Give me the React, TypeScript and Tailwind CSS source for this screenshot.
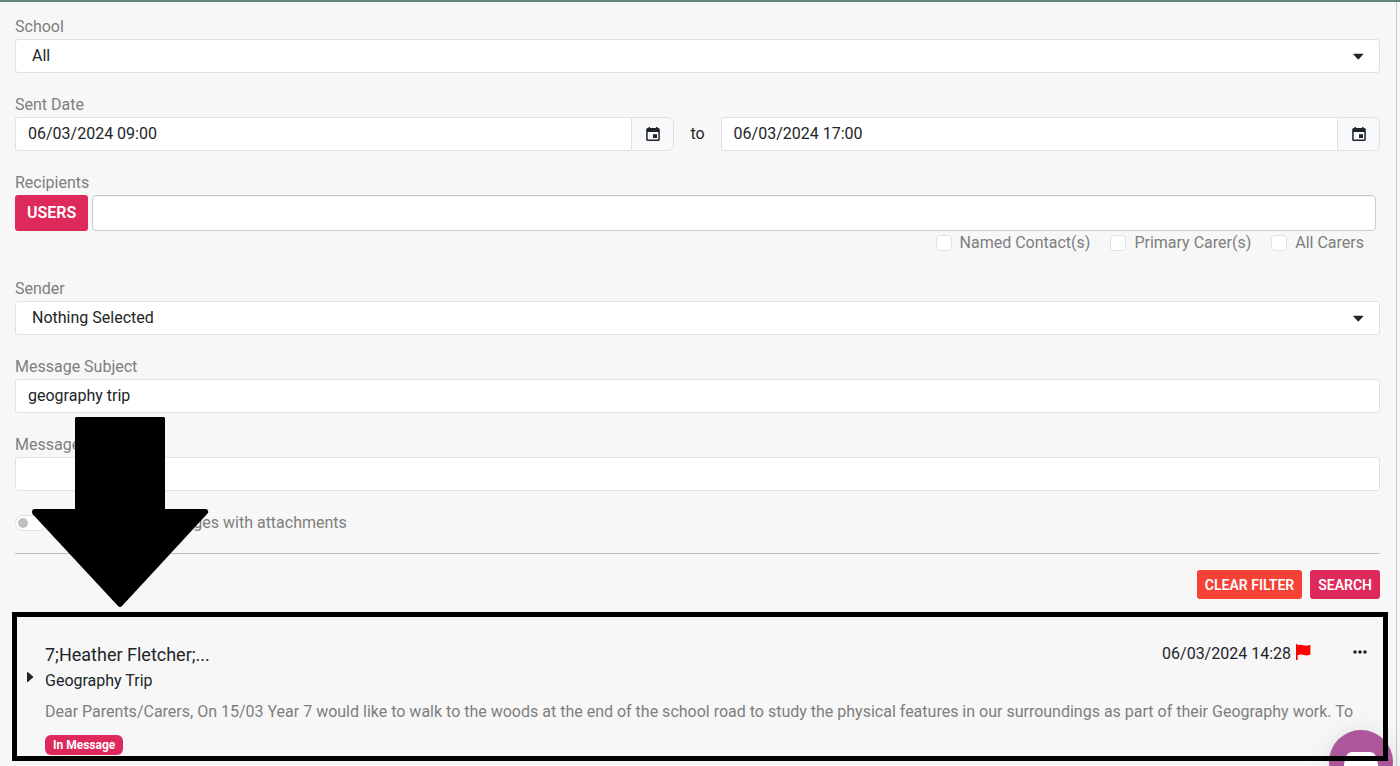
import type { ReactNode } from 'react';

const labelClass = 'block h-6 leading-6 text-[#7e7e7e]';
const fieldClass =
  'block h-[34px] w-full min-w-0 rounded-[3px] border border-[#dee2e6] bg-white px-3 pb-0.5 text-[#212529] outline-none';

function CalendarIcon() {
  return (
    <svg width="14" height="15" viewBox="0 0 14 15" fill="#212529" aria-hidden="true">
      <path
        fillRule="evenodd"
        d="M2.500 0H4v1h6V0h1.500v1h.8A1.600 1.600 0 0 1 13.800 2.600v9.800A1.600 1.600 0 0 1 12.300 14H1.700A1.600 1.600 0 0 1 .2 12.400V2.600A1.600 1.600 0 0 1 1.700 1h.8zM1.700 5v7.500h10.600V5zM7 7.200h4V11H7z"
      />
    </svg>
  );
}

function SelectField({ id, label, value }: { id: string; label: string; value: string }) {
  return (
    <div>
      <label htmlFor={id} className={labelClass}>{label}</label>
      <div className="relative">
        <select
          id={id}
          className="block h-[34px] w-full appearance-none rounded-[3px] border border-[#dee2e6] bg-white px-4 text-[#212529] outline-none"
        >
          <option>{value}</option>
        </select>
        <svg className="pointer-events-none absolute top-[14px] right-4" width="11" height="7" viewBox="0 0 11 7" fill="#212529" aria-hidden="true">
          <path d="M.8.700h9q.8.200.3.900L6 6.100q-.7.600-1.400 0L.5 1.600Q0 .9.800.7z" />
        </svg>
      </div>
    </div>
  );
}

function DateField({ id, name, value }: { id: string; name: string; value: string }) {
  return (
    <div className="flex flex-1">
      <input
        id={id}
        aria-label={name}
        defaultValue={value}
        className="h-[34px] min-w-0 flex-1 rounded-l-[3px] border border-r-0 border-[#dee2e6] bg-white px-3 pb-0.5 text-[#212529] outline-none"
      />
      <button
        type="button"
        aria-label="Open calendar"
        className="flex h-[34px] w-[43px] items-center justify-center rounded-r-md border border-[#dee2e6] bg-[#f8f9fa]"
      >
        <CalendarIcon />
      </button>
    </div>
  );
}

function TextField({ id, label, value }: { id: string; label: string; value: string }) {
  return (
    <div>
      <label htmlFor={id} className={labelClass}>{label}</label>
      <input id={id} defaultValue={value} className={fieldClass} />
    </div>
  );
}

function CheckOption({ children }: { children: ReactNode }) {
  return (
    <label className="flex items-center gap-2 text-[#7e7e7e]">
      <input type="checkbox" className="size-4 appearance-none rounded-[4px] border border-[#dee2e6] bg-white" />
      {children}
    </label>
  );
}

export default function App() {
  return (
    <div className="relative flex min-h-screen overflow-hidden border-t-2 border-[#628680] bg-[#f7f7f7] font-['Roboto',sans-serif] text-base text-[#212529]">
      <main className="min-w-0 flex-1 pt-[13px] pr-4 pl-[15px]">
        <form className="flex flex-col gap-5" onSubmit={(e) => e.preventDefault()}>
          <SelectField id="school" label="School" value="All" />

          <div>
            <label htmlFor="sent-from" className={labelClass}>Sent Date</label>
            <div className="flex items-center">
              <DateField id="sent-from" name="Sent date from" value="06/03/2024 09:00" />
              <span className="px-4">to</span>
              <DateField id="sent-to" name="Sent date to" value="06/03/2024 17:00" />
            </div>
          </div>

          <div>
            <label htmlFor="recipients" className={labelClass}>Recipients</label>
            <div className="flex gap-1 pr-1">
              <button type="button" className="h-9 rounded-[3px] bg-[#de295c] px-3 font-semibold text-white">USERS</button>
              <input
                id="recipients"
                className="h-9 min-w-0 flex-1 rounded-[4px] border border-[#cccccc] bg-white px-3 inset-shadow-2xs outline-none"
              />
            </div>
            <div className="flex h-[26px] items-start justify-end gap-5 pr-4">
              <CheckOption>Named Contact(s)</CheckOption>
              <CheckOption>Primary Carer(s)</CheckOption>
              <CheckOption>All Carers</CheckOption>
            </div>
          </div>

          <SelectField id="sender" label="Sender" value="Nothing Selected" />
          <TextField id="subject" label="Message Subject" value="geography trip" />
          <TextField id="body" label="Message Body" value="" />

          <label className="flex h-6 items-center gap-2 text-[#7e7e7e]">
            <input
              type="checkbox"
              role="switch"
              className="h-4 w-8 appearance-none rounded-full border border-[#dee2e6] bg-white before:m-[2px] before:block before:size-[10px] before:rounded-full before:bg-[#bfbfbf]"
            />
            Only include messages with attachments
          </label>
        </form>

        <hr className="mt-[18px] border-[#c1c1c1]" />

        <div className="mt-4 flex justify-end gap-2 text-sm font-semibold text-white">
          <button type="button" className="h-[29px] rounded-[3px] bg-[#f44336] px-2">CLEAR FILTER</button>
          <button type="button" className="h-[29px] rounded-[3px] bg-[#de295c] px-2">SEARCH</button>
        </div>

        <article className="relative z-10 -mr-2 -ml-[3px] mt-[13px] flex h-[149px] border-[5px] border-black pt-6 pr-4 pl-[9px]">
          <button type="button" aria-label="Expand message" className="mt-[30px] flex h-3 w-[19px] shrink-0">
            <svg width="9" height="12" viewBox="0 0 9 12" fill="#212529" aria-hidden="true">
              <path d="M1 1.500q.3-.9 1.100-.3L7 5.400q.7.600 0 1.200L2.100 10.800Q1.300 11.400 1 10.500z" />
            </svg>
          </button>
          <div className="min-w-0 flex-1">
            <div className="flex items-start">
              <h2 className="flex-1 text-lg leading-7">7;Heather Fletcher;...</h2>
              <time className="leading-[26px]">06/03/2024 14:28</time>
              <svg className="mt-[3px] ml-1 shrink-0" width="16" height="16" viewBox="0 0 16 16" fill="#ff0000" aria-label="Flagged">
                <path d="M1 0h1.600v1.200C5 .3 6.500.6 8.500 1.300c2 .6 4 .6 6-.3q.9-.2.9.7v8.200q0 .6-.6.900c-2.300.9-4 .8-6.300.2-2-.6-3.500-.6-5.900.2V16H1z" />
              </svg>
              <button type="button" aria-label="Message actions" className="mt-2 ml-[42px]">
                <svg width="14" height="6" viewBox="0 0 14 6" fill="#212529" aria-hidden="true">
                  <circle cx="2" cy="3" r="1.800" />
                  <circle cx="7" cy="3" r="1.800" />
                  <circle cx="12" cy="3" r="1.800" />
                </svg>
              </button>
            </div>
            <p className="leading-6">Geography Trip</p>
            <p className="mt-[7px] whitespace-nowrap leading-6 text-[#7e7e7e]">
              Dear Parents/Carers, On 15/03 Year 7 would like to walk to the woods at the end of the school road to study the physical features in our surroundings as part of their Geography work. To
            </p>
            <span className="mt-[11px] block w-fit rounded-md bg-[#de295c] px-2 text-xs leading-5 font-bold text-white">In Message</span>
          </div>
        </article>
      </main>

      <div className="w-1 border-l border-[#c9c9c9]" />

      <svg className="pointer-events-none absolute top-[415px] left-[32px] z-20" width="177" height="190" viewBox="0 0 177 190" aria-hidden="true">
        <path d="M44 0h88l1 1v91h41q3 1 2 4L90 189q-2 2-4 0L.500 97Q-1 93 2 92h41V1z" fill="#000" />
      </svg>

      <button
        type="button"
        aria-label="Open chat"
        className="absolute right-[7px] -bottom-7 flex size-16 justify-center rounded-full bg-[#ab5799] pt-[22px] shadow-[0_2px_24px_rgba(0,60,60,0.12)]"
      >
        <svg width="34" height="28" viewBox="0 0 34 28" fill="#fff" aria-hidden="true">
          <path d="M8 0h18q5 0 6.500 6L34 12v6q0 4-6 4h-2v6l-8-6H6q-6 0-6-4v-6L1.500 6Q3 0 8 0z" />
        </svg>
      </button>
    </div>
  );
}
